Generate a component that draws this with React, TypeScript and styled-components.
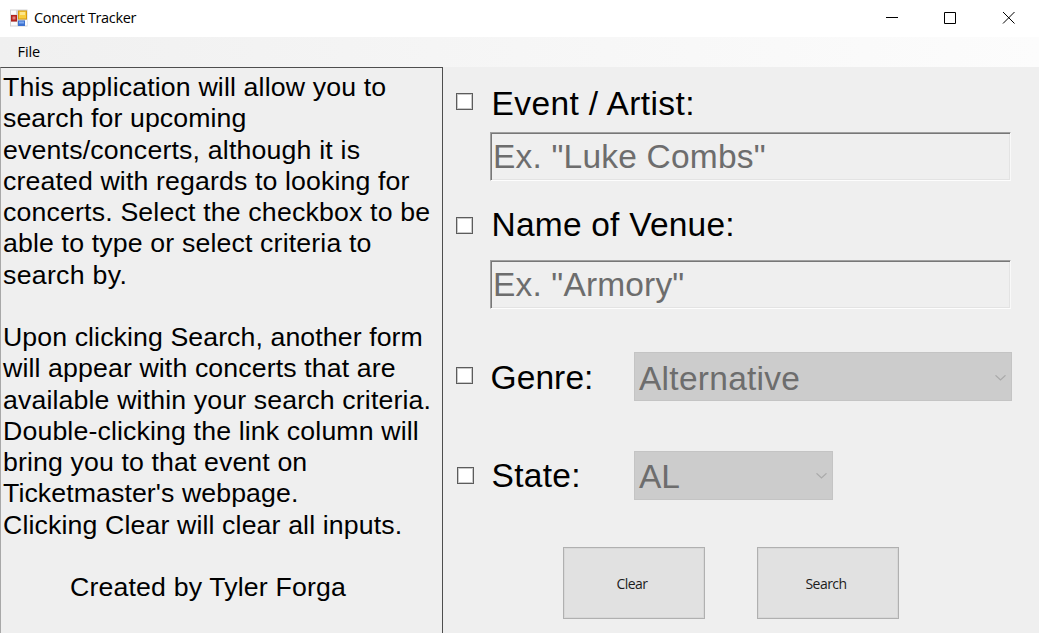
import React from "react";
import styled, { createGlobalStyle } from "styled-components";

const GlobalStyle = createGlobalStyle`
  * { box-sizing: border-box; }
  body { margin: 0; background: #efefef; overflow: hidden; }
`;

const Window = styled.div`
  width: 1039px;
  height: 633px;
  display: flex;
  flex-direction: column;
  overflow: hidden;
  background: #efefef;
  color: #000;
  font-family: "Liberation Sans", Arial, sans-serif;
`;

const TitleBar = styled.header`
  height: 37px;
  flex: none;
  display: flex;
  align-items: center;
  padding: 0 24px 2px 10px;
  background: #fff;
  font-family: "Open Sans", "Noto Sans", sans-serif;
`;

const Title = styled.span`
  flex: 1;
  margin-left: 6px;
  font-size: 14.5px;
  line-height: 20px;
  letter-spacing: -0.35px;
  white-space: nowrap;
`;

const Controls = styled.div`
  display: flex;
  gap: 46px;
`;

const Glyph = styled.svg`
  display: block;
  flex: none;
`;

const MenuBar = styled.nav`
  height: 30px;
  flex: none;
  display: flex;
  align-items: center;
  padding-left: 17.5px;
  background: linear-gradient(90deg, #f0f0f0, #fcfcfc);
  font-family: "Open Sans", "Noto Sans", sans-serif;
  font-size: 14.5px;
  line-height: 20px;
  letter-spacing: -0.1px;
`;

const Body = styled.main`
  flex: 1;
  min-height: 0;
  display: flex;
`;

const InfoPanel = styled.section`
  width: 443px;
  flex: none;
  border: solid #4e4e4e;
  border-width: 1px 1px 0 1px;
  border-left-color: #a8a8a8;
  padding: 4px 0 0 2px;
`;

const Line = styled.div<{ $spacing?: number; $indent?: number }>`
  height: 31.27px;
  line-height: 31.27px;
  font-size: 26.7px;
  white-space: pre;
  padding-left: ${(p) => p.$indent ?? 0}px;
  letter-spacing: ${(p) => p.$spacing ?? 0}px;
`;

const Form = styled.section`
  flex: 1;
  padding: 17px 0 0 13px;
`;

const Row = styled.div<{ $top?: number; $height: number }>`
  display: flex;
  align-items: flex-start;
  height: ${(p) => p.$height}px;
  margin-top: ${(p) => p.$top ?? 0}px;
`;

const Check = styled.span<{ $top: number; $left?: number }>`
  width: 17px;
  height: 17px;
  flex: none;
  margin: ${(p) => p.$top}px 0 0 ${(p) => p.$left ?? 0}px;
  border: 1px solid #5c5c5c;
  box-shadow: inset 0 0 0 1px #c8c8c8;
  background: #fff;
`;

const Label = styled.span<{ $left: number; $top?: number; $width?: number; $spacing?: number }>`
  margin: ${(p) => p.$top ?? 1}px 0 0 ${(p) => p.$left}px;
  width: ${(p) => (p.$width ? `${p.$width}px` : "auto")};
  font-size: 33.5px;
  line-height: 38px;
  white-space: pre;
  letter-spacing: ${(p) => p.$spacing ?? 0}px;
`;

const TextBox = styled.div<{ $top: number; $spacing?: number }>`
  width: 521px;
  height: 49px;
  margin: ${(p) => p.$top}px 0 0 34px;
  border: 1px solid #a0a0a0;
  border-right-color: #f9f9f9;
  border-bottom-color: #fdfdfd;
  box-shadow: inset 1px 1px 0 #777, inset -1px -1px 0 #e3e3e3;
  padding-left: 2px;
  color: #6d6d6d;
  font-size: 33.5px;
  line-height: 48px;
  white-space: pre;
  letter-spacing: ${(p) => p.$spacing ?? 0}px;
`;

const Combo = styled.div<{ $width: number; $top: number; $spacing?: number }>`
  width: ${(p) => p.$width}px;
  height: 49px;
  display: flex;
  align-items: center;
  justify-content: space-between;
  border: 1px solid #c4c4c4;
  background: #ccc;
  padding: ${(p) => p.$top}px 5px 0 4px;
  color: #6d6d6d;
  font-size: 33.5px;
  line-height: 44px;
  letter-spacing: ${(p) => p.$spacing ?? 0}px;
`;

const Buttons = styled.div`
  display: flex;
  gap: 52px;
  margin: 47px 0 0 107px;
`;

const Button = styled.button`
  width: 142px;
  height: 72px;
  padding: 1px 4px 0 0;
  border: 1px solid #b0b0b0;
  border-radius: 0;
  background: #e1e1e1;
  box-shadow: inset 0 0 0 1px #d8d8d8;
  color: #1c1c1c;
  font-family: "Open Sans", "Noto Sans", sans-serif;
  font-size: 14px;
  letter-spacing: -0.55px;
`;

const AppIcon = () => (
  <Glyph width="18" height="18" viewBox="0 0 18 18">
    <rect x="0" y="0.5" width="17.5" height="17" fill="#d3d3d5" />
    <path d="M1 1.5h5v4H1zM1 13h6v3.500H1zM15 11h2v5.500h-2z" fill="#fbfbfb" />
    <rect x="1" y="6" width="6" height="6.500" fill="#b3211b" />
    <rect x="2.500" y="7.500" width="3" height="3" fill="#e08078" />
    <rect x="8" y="1.500" width="9" height="9" fill="#d79a12" />
    <rect x="9" y="2.500" width="7" height="7" fill="#f9cd3c" />
    <rect x="10" y="3" width="5" height="3" fill="#fde68c" />
    <rect x="8" y="11.500" width="7" height="5.500" fill="#3d72d0" />
    <rect x="9" y="12.500" width="5" height="2" fill="#80aaf0" />
  </Glyph>
);

const Chevron = () => (
  <Glyph width="11" height="7" viewBox="0 0 11 7">
    <path d="M0.500 0.300 5.500 5 10.500 0.300" fill="none" stroke="#aaa" strokeWidth="1.200" />
  </Glyph>
);

const intro: { text: string; spacing?: number; indent?: number }[] = [
  { text: "This application will allow you to", spacing: 0.15 },
  { text: "search for upcoming", spacing: 0.08 },
  { text: "events/concerts, although it is", spacing: 0.18 },
  { text: "created with regards to looking for", spacing: 0.13 },
  { text: "concerts. Select the checkbox to be", spacing: 0.17 },
  { text: "able to type or select criteria to", spacing: 0.15 },
  { text: "search by.", spacing: 0.3 },
  { text: "" },
  { text: "Upon clicking Search, another form", spacing: 0.09 },
  { text: "will appear with concerts that are", spacing: 0.12 },
  { text: "available within your search criteria.", spacing: 0.14 },
  { text: "Double-clicking the link column will", spacing: 0.14 },
  { text: "bring you to that event on", spacing: 0.12 },
  { text: "Ticketmaster's webpage.", spacing: 0.09 },
  { text: "Clicking Clear will clear all inputs.", spacing: 0.13 },
  { text: "" },
  { text: "Created by Tyler Forga", spacing: 0.16, indent: 67 },
];

export default function App() {
  return (
    <Window>
      <GlobalStyle />
      <TitleBar>
        <AppIcon />
        <Title>Concert Tracker</Title>
        <Controls>
          <Glyph width="12" height="13" viewBox="0 0 12 13">
            <path d="M0 6.500h12" stroke="#000" />
          </Glyph>
          <Glyph width="12" height="13" viewBox="0 0 12 13">
            <path d="M.5 1.500h11v11H.5z" fill="none" stroke="#000" />
          </Glyph>
          <Glyph width="13" height="13" viewBox="0 0 13 13">
            <path d="M1 1 12.500 12.500M12.500 1 1 12.500" stroke="#000" />
          </Glyph>
        </Controls>
      </TitleBar>
      <MenuBar>File</MenuBar>
      <Body>
        <InfoPanel>
          {intro.map((l, i) => (
            <Line key={i} $spacing={l.spacing} $indent={l.indent}>
              {l.text}
            </Line>
          ))}
        </InfoPanel>
        <Form>
          <Row $height={38}>
            <Check $top={9} />
            <Label $left={18.5} $spacing={0.4}>Event / Artist:</Label>
          </Row>
          <TextBox $top={10} $spacing={0.2}>Ex. "Luke Combs"</TextBox>
          <Row $height={38} $top={24}>
            <Check $top={12} />
            <Label $left={18.5} $spacing={0.22}>Name of Venue:</Label>
          </Row>
          <TextBox $top={17} $spacing={0.16}>Ex. "Armory"</TextBox>
          <Row $height={49} $top={43}>
            <Check $top={15} />
            <Label $left={17.5} $top={7} $width={143.5} $spacing={0.1}>Genre:</Label>
            <Combo $width={377.5} $top={4} $spacing={0.27}>
              Alternative
              <Chevron />
            </Combo>
          </Row>
          <Row $height={49} $top={50}>
            <Check $top={16} $left={1} />
            <Label $left={17.5} $top={6} $width={142.5} $spacing={0.3}>State:</Label>
            <Combo $width={199} $top={2}>
              AL
              <Chevron />
            </Combo>
          </Row>
          <Buttons>
            <Button>Clear</Button>
            <Button>Search</Button>
          </Buttons>
        </Form>
      </Body>
    </Window>
  );
}
